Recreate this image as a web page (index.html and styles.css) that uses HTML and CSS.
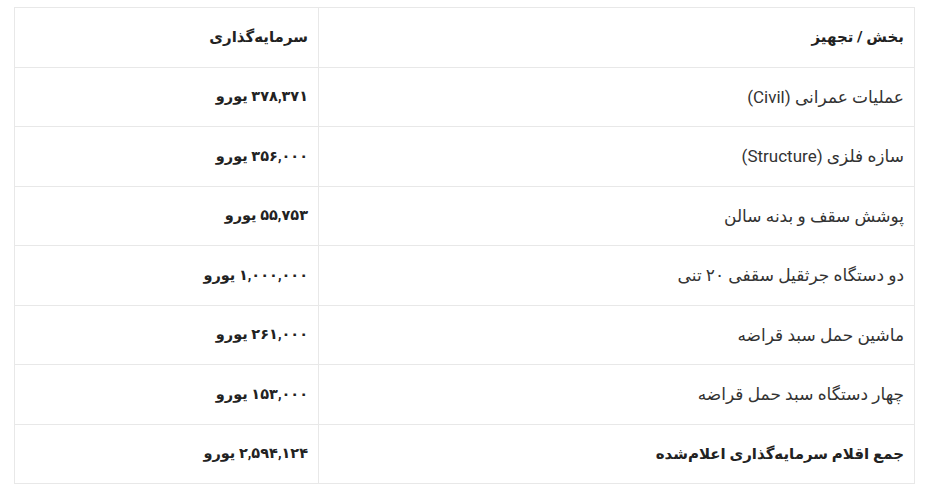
FILE: index.html
```html
<!DOCTYPE html>
<html lang="fa" dir="rtl">
<head>
    <meta charset="UTF-8">
    <meta name="viewport" content="width=device-width, initial-scale=1.0">
    <title>سرمایه‌گذاری</title>
    <link rel="stylesheet" href="styles.css">
</head>
<body>
    <div class="table-wrap">
        <table class="invest-table">
            <thead>
                <tr>
                    <th class="col-item">بخش / تجهیز</th>
                    <th class="col-value">سرمایه‌گذاری</th>
                </tr>
            </thead>
            <tbody>
                <tr>
                    <td>عملیات عمرانی (Civil)</td>
                    <td class="amount">۳۷۸,۳۷۱ یورو</td>
                </tr>
                <tr>
                    <td>سازه فلزی (Structure)</td>
                    <td class="amount">۳۵۶,۰۰۰ یورو</td>
                </tr>
                <tr>
                    <td>پوشش سقف و بدنه سالن</td>
                    <td class="amount">۵۵,۷۵۳ یورو</td>
                </tr>
                <tr>
                    <td>دو دستگاه جرثقیل سقفی ۲۰ تنی</td>
                    <td class="amount">۱,۰۰۰,۰۰۰ یورو</td>
                </tr>
                <tr>
                    <td>ماشین حمل سبد قراضه</td>
                    <td class="amount">۲۶۱,۰۰۰ یورو</td>
                </tr>
                <tr>
                    <td>چهار دستگاه سبد حمل قراضه</td>
                    <td class="amount">۱۵۳,۰۰۰ یورو</td>
                </tr>
                <tr class="total-row">
                    <td>جمع اقلام سرمایه‌گذاری اعلام‌شده</td>
                    <td class="amount">۲,۵۹۴,۱۲۴ یورو</td>
                </tr>
            </tbody>
        </table>
    </div>
</body>
</html>
```

FILE: styles.css
```css
* {
    margin: 0;
    padding: 0;
    box-sizing: border-box;
}

body {
    font-family: Roboto, 'DejaVu Sans', sans-serif;
    background: #ffffff;
    color: #333333;
}

.table-wrap {
    padding: 7px 12px 0 14px;
}

.invest-table {
    width: 901px;
    border-collapse: collapse;
    font-size: 17px;
}

.invest-table th,
.invest-table td {
    border: 1px solid #e8e8e8;
    height: 59.5px;
    padding: 0 10px 0 11px;
    text-align: right;
    vertical-align: middle;
}

/* DejaVu bold runs wide, so bold cells are set a little smaller */
.invest-table th {
    font-size: 15px;
    font-weight: 700;
    color: #222222;
}

.col-item {
    width: 596px;
}

.amount {
    font-size: 14.5px;
    font-weight: 700;
    color: #222222;
}

.total-row td {
    font-weight: 700;
    color: #222222;
}

.total-row td:first-child {
    font-size: 15px;
}
```
